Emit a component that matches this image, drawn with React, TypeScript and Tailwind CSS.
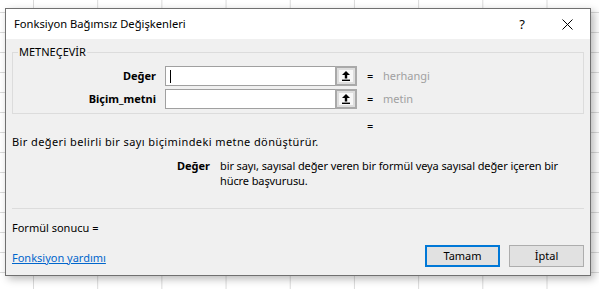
import React from 'react';

const font = "font-['Noto_Sans','Open_Sans',sans-serif]";

const RefButton = () => (
    <div className="flex h-full w-[22px] items-center justify-center border-2 border-[#a9a9a9] bg-[#dedede] p-[2px]">
        <div className="flex h-full w-full items-center justify-center bg-[#f7f7f7]">
            <svg width="8" height="10" viewBox="0 0 8 10">
                <path d="M4 0 L8 4 L5.2 4 L5.2 7.5 L2.8 7.5 L2.8 4 L0 4 Z" fill="#000" />
                <rect x="0" y="8.6" width="8" height="1.4" fill="#000" />
            </svg>
        </div>
    </div>
);

const ArgRow = ({ label, value, focused }: { label: string; value: string; focused?: boolean }) => (
    <div className="flex h-[20px] items-center">
        <div className="w-[143px] text-right font-bold">{label}</div>
        <div className="ml-[9px] flex h-full w-[192px] border border-[#a0a0a0] bg-white">
            <div className="flex flex-1 items-center pl-[4px]">
                {focused && <div className="h-[13px] w-px bg-black" />}
            </div>
            <div className="-my-px -mr-px h-[20px]">
                <RefButton />
            </div>
        </div>
        <span className="ml-[10px] w-[16px]">=</span>
        <span className="text-[#a0a0a0]">{value}</span>
    </div>
);

export default function App() {
    return (
        <div
            className={`h-[289px] w-[599px] overflow-hidden bg-white bg-[linear-gradient(to_right,#dadada_1px,transparent_1px),linear-gradient(to_bottom,#dadada_1px,transparent_1px)] bg-[length:64.2px_20px] bg-[position:33px_12px] pt-[8px] pl-[5px] text-[11px] leading-[16px] text-black ${font}`}
        >
            <div className="flex h-[268px] w-[586px] flex-col border border-[#707070] bg-[#f0f0f0] shadow-[3px_3px_8px_rgba(0,0,0,0.28)]">
                {/* title bar */}
                <div className="flex h-[30px] items-center bg-white pl-[8px] pr-[17px]">
                    <span className="flex-1 text-[11.2px]">Fonksiyon Bağımsız Değişkenleri</span>
                    <span className="mr-[37px] text-[13px]">?</span>
                    <svg width="11" height="11" viewBox="0 0 11 11">
                        <path d="M0.5 0.5 L10.5 10.5 M10.5 0.5 L0.5 10.5" stroke="#000" strokeWidth="1" />
                    </svg>
                </div>

                <div className="flex flex-1 flex-col px-[6px]">
                    {/* argument group */}
                    <div className="relative mt-[13px] flex flex-col gap-[3px] border border-[#dcdcdc] pt-[13px] pb-[4px]">
                        <span className="absolute -top-[9px] left-[5px] bg-[#f0f0f0] px-px">METNEÇEVİR</span>
                        <ArgRow label="Değer" value="herhangi" focused />
                        <ArgRow label="Biçim_metni" value="metin" />
                    </div>

                    <div className="mt-[4px] pl-[355px]">=</div>
                    <div className="tracking-[0.4px]">Bir değeri belirli bir sayı biçimindeki metne dönüştürür.</div>

                    <div className="mt-[8px] flex leading-[15px]">
                        <div className="w-[198px] text-right font-bold">Değer</div>
                        <div className="ml-[10px] w-[352px] tracking-[-0.1px]">
                            bir sayı, sayısal değer veren bir formül veya sayısal değer içeren bir hücre başvurusu.
                        </div>
                    </div>

                    <div className="mt-[20px] h-px bg-[#dcdcdc]" />

                    <div className="mt-[11px]">Formül sonucu =</div>

                    <div className="mt-[9px] flex items-center justify-between">
                        <a className="pt-[3px] text-[#0066cc] underline">Fonksiyon yardımı</a>
                        <div className="flex gap-[9px]">
                            <button className="h-[22px] w-[75px] border-2 border-[#0078d7] bg-[#e1e1e1]">Tamam</button>
                            <button className="h-[22px] w-[75px] border border-[#adadad] bg-[#e1e1e1]">İptal</button>
                        </div>
                    </div>
                </div>
            </div>
        </div>
    );
}
